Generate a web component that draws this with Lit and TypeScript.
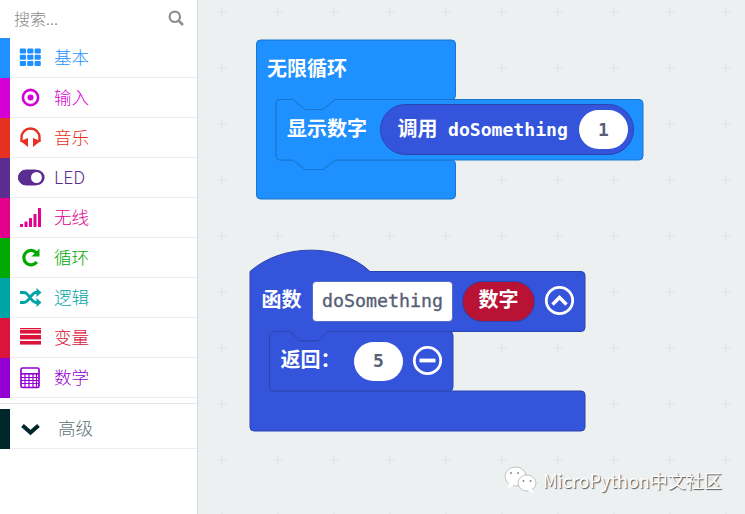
import { LitElement, html, css, svg } from "lit";
import { customElement } from "lit/decorators.js";

const icons: Record<string, unknown> = {
  basic: svg`<g fill="currentColor">${[0, 1, 2].flatMap((r) =>
    [0, 1, 2].map((c) => svg`<rect x=${c * 7.4 - 0.2} y=${r * 6.2 + 1.5} width="6.2" height="5" rx="1"/>`)
  )}</g>`,
  input: svg`<circle cx="10.5" cy="10.5" r="7.6" fill="none" stroke="currentColor" stroke-width="2.6"/><circle cx="10.5" cy="10.5" r="3" fill="currentColor"/>`,
  music: svg`<path d="M1.5 15 V10.5 a9 9 0 0 1 18 0 V15" fill="none" stroke="currentColor" stroke-width="2.4"/><path d="M0.5 14 L8 11 V20 Z M20.5 14 L13 11 V20 Z" fill="currentColor"/>`,
  led: svg`<rect x="-1.6" y="3" width="24.2" height="15" rx="7.5" fill="#fff" stroke="currentColor" stroke-width="1"/><path d="M5.9 3 h11.2 a7.5 7.5 0 0 1 0 15 h-11.2 a7.5 7.5 0 0 1 0 -15 Z M16.5 5 a5.5 5.5 0 0 0 0 11 a5.5 5.5 0 0 0 0 -11 Z" fill="currentColor" fill-rule="evenodd"/>`,
  radio: svg`<g fill="currentColor"><rect x="0" y="17" width="3" height="3" rx=".5"/><rect x="4.5" y="14.5" width="3" height="5.5" rx=".5"/><rect x="9" y="11" width="3" height="9" rx=".5"/><rect x="13.5" y="7" width="3" height="13" rx=".5"/><rect x="18" y="1" width="3" height="19" rx=".5"/></g>`,
  loop: svg`<path d="M16.2 5.6 A7.2 7.2 0 1 0 16.8 15" fill="none" stroke="currentColor" stroke-width="3.2"/><path d="M19.5 1.5 V9.5 H11.5 Z" fill="currentColor"/>`,
  logic: svg`<path d="M0 5.5 H4 C9 5.5 11 15.5 16 15.5 H18 M0 15.5 H4 C9 15.5 11 5.5 16 5.5 H18" fill="none" stroke="currentColor" stroke-width="3"/><path d="M16.5 1 L21.5 5.5 L16.5 10 Z M16.5 11 L21.5 15.5 L16.5 20 Z" fill="currentColor"/>`,
  variables: svg`<g fill="currentColor"><rect x="0" y="1" width="21" height="1.3"/><rect x="0" y="3" width="21" height="3.6"/><rect x="0" y="8" width="21" height="4.4"/><rect x="0" y="14" width="21" height="3.6"/></g>`,
  math: svg`<rect x="1" y="1" width="18" height="19.5" rx="1.5" fill="none" stroke="currentColor" stroke-width="1.7"/><rect x="1" y="6" width="18" height="1.6" fill="currentColor"/><path d="M1 10.5 H19 M1 13.5 H19 M1 16.5 H19 M5 7 V20 M9 7 V20 M13 7 V20 M16.5 7 V20" stroke="currentColor" stroke-width="1.2" fill="none"/>`,
  advanced: svg`<path d="M2.5 7.5 L10.5 14.5 L18.5 7.5" fill="none" stroke="currentColor" stroke-width="4"/>`,
};

const rows = [
  { id: "basic", label: "基本", color: "#1e90ff" },
  { id: "input", label: "输入", color: "#d400d4" },
  { id: "music", label: "音乐", color: "#e63022" },
  { id: "led", label: "LED", color: "#5c2d91" },
  { id: "radio", label: "无线", color: "#e3008c" },
  { id: "loop", label: "循环", color: "#00aa00" },
  { id: "logic", label: "逻辑", color: "#00a4a6" },
  { id: "variables", label: "变量", color: "#dc143c" },
  { id: "math", label: "数学", color: "#9400d3" },
];

@customElement("toolbox-row")
class ToolboxRow extends LitElement {
  static properties = {
    icon: {},
    label: {},
    color: {},
    wide: { type: Boolean },
  };
  icon = "";
  label = "";
  color = "";
  wide = false;

  static styles = css`
    :host { display: block; }
    .row {
      display: flex;
      align-items: stretch;
      height: 40px;
      box-sizing: border-box;
      border-bottom: 1px solid #ebeef0;
    }
    .bar { width: 10px; margin-bottom: -1px; }
    .icon { width: 40px; display: flex; align-items: center; justify-content: center; }
    svg { width: 21px; height: 21px; overflow: visible; }
    .label {
      display: flex;
      align-items: center;
      padding-left: 4px;
      padding-bottom: 2px;
      font: 300 17.6px "Noto Sans CJK SC", "Noto Sans", sans-serif;
    }
    .wide .label { padding-left: 8px; color: #5d7377 !important; }
  `;

  render() {
    const c = `color:${this.color}`;
    return html`<div class="row ${this.wide ? "wide" : ""}">
      <div class="bar" style="background:${this.color}"></div>
      <div class="icon" style=${c}><svg viewBox="0 0 21 21">${icons[this.icon]}</svg></div>
      <div class="label" style=${c}>${this.label}</div>
    </div>`;
  }
}

@customElement("app-root")
class AppRoot extends LitElement {
  static styles = css`
    :host { display: block; width: 745px; height: 514px; overflow: hidden; }
    .page { display: flex; width: 745px; height: 514px; }
    .side {
      width: 198px;
      flex: none;
      box-sizing: border-box;
      background: #fff;
      border-right: 1px solid #d4d8da;
    }
    .search {
      height: 38px;
      box-sizing: border-box;
      display: flex;
      align-items: center;
      justify-content: space-between;
      padding: 0 13px 2px 14px;
      color: #8a8a8a;
      font: 300 16px "Noto Sans CJK SC", "Noto Sans", sans-serif;
    }
    .search svg { width: 16px; height: 16px; }
    .sep { height: 1px; background: #e3e6e8; margin: 5px 0; }
    .canvas { flex: 1; position: relative; background: #ecf0f1; }
    .canvas svg.ws { position: absolute; left: -198px; top: 0; width: 745px; height: 514px; }
    .cjk { font-family: "Noto Sans CJK SC", sans-serif; font-weight: 700; font-size: 20px; fill: #fff; }
    .mono { font-family: "DejaVu Sans Mono", monospace; font-weight: 700; font-size: 18.1px; fill: #fff; }
    .field { font-family: "DejaVu Sans Mono", monospace; font-weight: 400; font-size: 18.3px; fill: #575e75; stroke: #575e75; stroke-width: .35; }
    .num { font-family: "DejaVu Sans Mono", monospace; font-weight: 700; font-size: 18px; fill: #575e75; }
    .mark {
      position: absolute;
      left: 345px;
      top: 467px;
      font: 400 18px "Noto Sans CJK SC", "Noto Sans", sans-serif;
      color: #fff;
      text-shadow: 1px 1px 1px #555;
      white-space: nowrap;
    }
    .b1 { fill: #1e90ff; stroke: #1874cc; stroke-width: 1; }
    .b2 { fill: #3455db; stroke: #2a44af; stroke-width: 1; }
  `;

  render() {
    return html`<div class="page">
      <div class="side">
        <div class="search">
          <span>搜索...</span>
          <svg viewBox="0 0 16 16"><circle cx="6.8" cy="6.8" r="5.2" fill="none" stroke="#8f8f8f" stroke-width="2.2"/><path d="M10.6 10.6 L15 15" stroke="#8f8f8f" stroke-width="2.6"/></svg>
        </div>
        ${rows.map((r) => html`<toolbox-row .icon=${r.id} .label=${r.label} .color=${r.color}></toolbox-row>`)}
        <div class="sep"></div>
        <toolbox-row .icon=${"advanced"} .label=${"高级"} .color=${"#00272b"} .wide=${true}></toolbox-row>
      </div>
      <div class="canvas">
        <svg class="ws" viewBox="0 0 745 514">
          <defs>
            <pattern id="grid" x="194" y="-16" width="56" height="56" patternUnits="userSpaceOnUse">
              <path d="M28 23.5 V32.5 M23.5 28 H32.5" stroke="#dde1e3" stroke-width="1"/>
            </pattern>
          </defs>
          <rect x="198" width="547" height="514" fill="url(#grid)"/>

          <path class="b1" d="M260.5 40 H451.5 a4 4 0 0 1 4 4 V95.5 a4 4 0 0 1 -4 4 H335 L323 109.5 H305 L293 99.5 H280 a4 4 0 0 0 -4 4 V156 a4 4 0 0 0 4 4 H293 L305 169.5 H323 L335 160 H451.5 a4 4 0 0 1 4 4 V195 a4 4 0 0 1 -4 4 H260.5 a4 4 0 0 1 -4 -4 V44 a4 4 0 0 1 4 -4 Z"/>
          <path class="b1" d="M280 99.5 H293 L305 109.5 H323 L335 99.5 H639 a4 4 0 0 1 4 4 V156 a4 4 0 0 1 -4 4 H335 L323 169.5 H305 L293 160 H280 a4 4 0 0 1 -4 -4 V103.5 a4 4 0 0 1 4 -4 Z"/>
          <text class="cjk" x="267" y="76">无限循环</text>
          <text class="cjk" x="287" y="136">显示数字</text>
          <rect class="b2" x="380.5" y="104.5" width="253" height="50" rx="25"/>
          <text class="cjk" x="397.5" y="136">调用</text>
          <text class="mono" x="448" y="136">doSomething</text>
          <rect x="579" y="110" width="49" height="39" rx="19.5" fill="#fff"/>
          <text class="num" x="603.5" y="136" text-anchor="middle">1</text>

          <path class="b2" d="M250 271.5 C282 243 340 243 370 271.5 H581 a4 4 0 0 1 4 4 V327.5 a4 4 0 0 1 -4 4 H328 L318 341 H300 L289.5 331.5 H273.5 a4 4 0 0 0 -4 4 V387 a4 4 0 0 0 4 4 H581 a4 4 0 0 1 4 4 V427 a4 4 0 0 1 -4 4 H254 a4 4 0 0 1 -4 -4 Z"/>
          <path d="M269.5 387 V335.5 a4 4 0 0 1 4 -4 H289.5 L300 341 H318 L328 331.5 H449 a4 4 0 0 1 4 4 V387 a4 4 0 0 1 -4 4 H273.5 a4 4 0 0 1 -4 -4 Z" fill="#3455db" stroke="#2a44af"/>
          <text class="cjk" x="261.5" y="307">函数</text>
          <rect x="312.5" y="281.5" width="140" height="40" rx="4" fill="#fff" stroke="#2a44af" stroke-width=".6"/>
          <text class="field" x="322" y="306.5">doSomething</text>
          <rect x="462.5" y="281.5" width="72" height="40" rx="20" fill="#b81234" stroke="#2a44af"/>
          <text class="cjk" x="478.5" y="307">数字</text>
          <circle cx="559.5" cy="300.5" r="13.2" fill="none" stroke="#fff" stroke-width="2.8"/>
          <path d="M552.5 304.5 L559.5 297.5 L566.5 304.5" fill="none" stroke="#fff" stroke-width="3.4"/>
          <text class="cjk" x="280.5" y="367">返回：</text>
          <rect x="354" y="342" width="49" height="39" rx="19.5" fill="#fff"/>
          <text class="num" x="378.5" y="367" text-anchor="middle">5</text>
          <circle cx="427.5" cy="360.5" r="13.2" fill="none" stroke="#fff" stroke-width="2.8"/>
          <path d="M419.5 360.5 H435.5" stroke="#fff" stroke-width="3.8"/>

          <g stroke="#aaa" stroke-width=".7" fill="#fff">
            <ellipse cx="515.5" cy="476.5" rx="10.5" ry="9.5"/>
            <path d="M508.5 483 L508 489 L514 485 Z" stroke="none"/>
            <ellipse cx="527" cy="483" rx="9" ry="8"/>
            <path d="M531.5 489 L534 493 L527.5 491 Z" stroke="none"/>
          </g>
          <g fill="#888"><circle cx="523.5" cy="481" r="1"/><circle cx="530.5" cy="481" r="1"/><circle cx="511" cy="473" r="1"/><circle cx="518" cy="473" r="1"/></g>
        </svg>
        <div class="mark">MicroPython中文社区</div>
      </div>
    </div>`;
  }
}
void ToolboxRow;
void AppRoot;
